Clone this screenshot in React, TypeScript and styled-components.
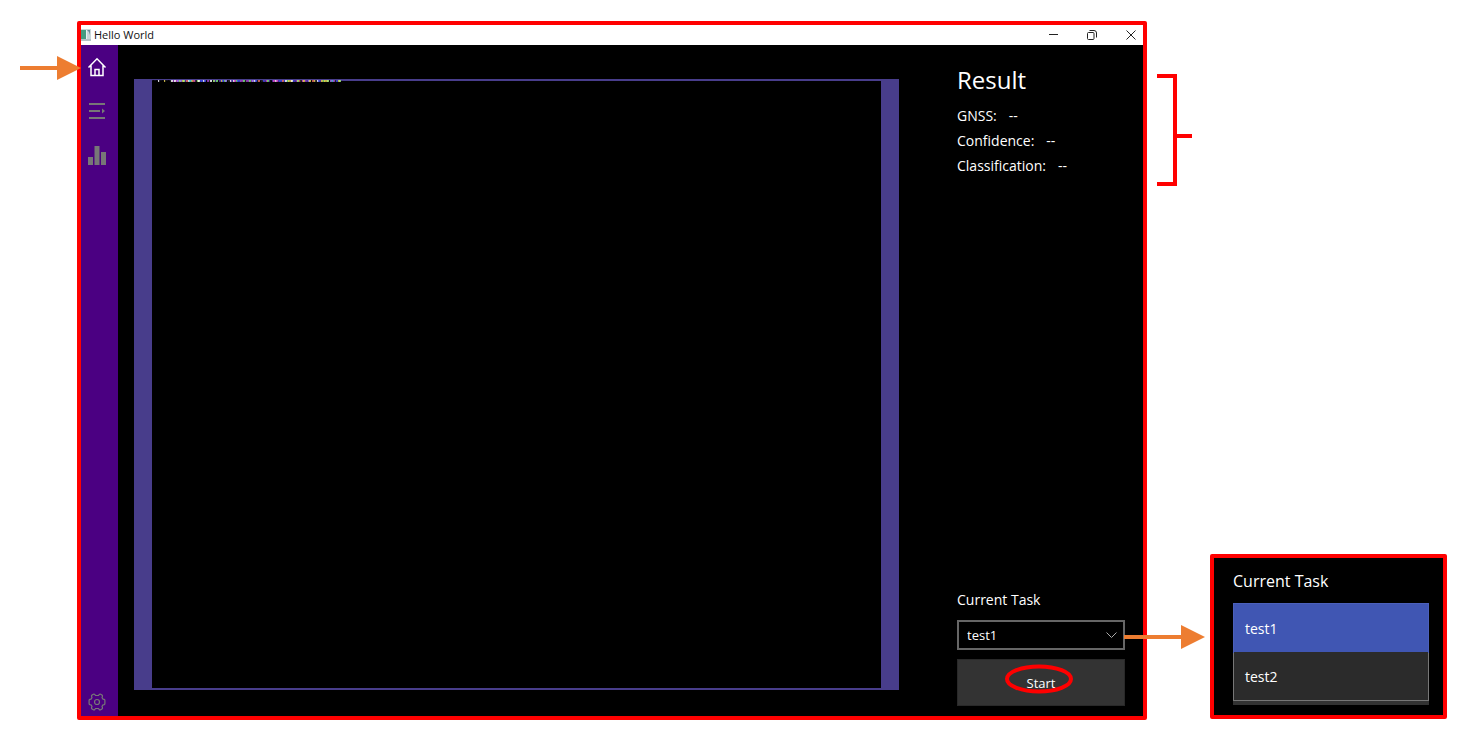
import React, { useState } from "react";
import styled, { createGlobalStyle } from "styled-components";

const GlobalStyle = createGlobalStyle`
  * { box-sizing: border-box; }
  body {
    margin: 0;
    background: #fff;
    font-family: "Open Sans", "Noto Sans", sans-serif;
  }
  button, select { font-family: inherit; }
`;

const RED = "#ff0000";
const ORANGE = "#ed7d31";

const Page = styled.div`
  display: grid;
  grid-template-columns: minmax(0, 1fr) 63px 237px;
  min-height: 100vh;
  padding: 21px 22px 22px 77px;
`;

const Window = styled.section`
  position: relative;
  display: flex;
  flex-direction: column;
  border: 4px solid ${RED};
  border-radius: 2px;
  background: #000;
  color: #fff;
`;

const TitleBar = styled.header`
  display: flex;
  align-items: center;
  height: 20px;
  background: #fff;
  color: #111;
  font-size: 11px;
  line-height: 20px;
`;

const AppTitle = styled.span`
  flex: 1;
  padding-left: 3px;
`;

const Controls = styled.div`
  display: flex;
  gap: 23px;
  padding-right: 4px;
`;

const IconButton = styled.button`
  display: grid;
  place-items: center;
  width: 16px;
  height: 18px;
  padding: 0;
  border: 0;
  background: none;
  color: #222;
`;

const Body = styled.div`
  display: flex;
  flex: 1;
`;

const Sidebar = styled.nav`
  display: flex;
  flex-direction: column;
  width: 37px;
  padding: 12px 6px 4px;
  background: #4b0082;
`;

const NavButton = styled.button<{ $active?: boolean; $last?: boolean }>`
  display: grid;
  place-items: center;
  width: 20px;
  height: 20px;
  margin: ${(p) => (p.$last ? "auto 0 0" : "0 0 24px")};
  padding: 0;
  border: 0;
  background: none;
  color: ${(p) => (p.$active ? "#fff" : "#777")};
`;

const Content = styled.main`
  display: grid;
  flex: 1;
  grid-template-columns: minmax(0, 1fr) 168px;
  gap: 58px;
  padding: 0 18px 0 16px;
`;

const Viewport = styled.div`
  margin: 34px 0 26px;
  border: solid #483d8b;
  border-width: 2px 18px;
  background: #000;
`;

const NoiseLine = styled.svg`
  display: block;
  margin-top: -1px;
`;

const Panel = styled.aside`
  display: flex;
  flex-direction: column;
  padding: 18px 0 10px;
`;

const Heading = styled.h1`
  margin: 0 0 6px;
  font-size: 24px;
  font-weight: 400;
  line-height: 34px;
`;

const Reading = styled.p`
  display: flex;
  gap: 12px;
  margin: 0;
  font-size: 14px;
  line-height: 25px;
`;

const TaskForm = styled.form`
  display: flex;
  flex-direction: column;
  margin-top: auto;
`;

const TaskLabel = styled.label`
  margin-bottom: 10px;
  font-size: 14px;
  line-height: 20px;
`;

const SelectBox = styled.div`
  display: grid;
  align-items: center;
  margin-bottom: 9px;
  > * { grid-area: 1 / 1; }
  > svg { justify-self: end; margin-right: 8px; pointer-events: none; }
`;

const Select = styled.select`
  appearance: none;
  width: 100%;
  height: 30px;
  padding: 0 28px 0 8px;
  border: 2px solid #666;
  border-radius: 0;
  background: #000;
  color: #fff;
  font-size: 13px;
`;

const StartButton = styled.button`
  position: relative;
  height: 47px;
  padding: 0;
  border: 1px solid #292929;
  background: #333;
  color: #fff;
  font-size: 13px;
`;

const StartMark = styled.svg`
  position: absolute;
  top: 4px;
  left: 46px;
  pointer-events: none;
`;

const ArrowOverlay = styled.svg<{ $side: "home" | "task" }>`
  position: absolute;
  ${(p) => (p.$side === "home" ? "left: -61px; top: 31px;" : "right: -62px; bottom: 67px;")}
  pointer-events: none;
`;

const Bracket = styled.svg`
  margin: 53px 0 0 10px;
  overflow: visible;
`;

const Popup = styled.section`
  align-self: end;
  justify-self: end;
  width: 237px;
  margin-bottom: 1px;
  padding: 11px 14px 14px 19px;
  border: 4px solid ${RED};
  border-radius: 2px;
  background: #000;
  color: #fff;
`;

const PopupTitle = styled.h2`
  margin: 0 0 11px;
  font-size: 16px;
  font-weight: 400;
  line-height: 24px;
`;

const Options = styled.div`
  border: 1px solid #777;
  border-top: 0;
  box-shadow: 0 4px #333;
`;

const Option = styled.button<{ $selected: boolean }>`
  display: block;
  width: 100%;
  height: 48px;
  padding: 0 11px;
  border: 0;
  background: ${(p) => (p.$selected ? "#4056b3" : "#2b2b2b")};
  color: #fff;
  box-shadow: ${(p) => (p.$selected ? "0 0 0 1px #4b60bb" : "none")};
  font-size: 14px;
  font-weight: ${(p) => (p.$selected ? 500 : 400)};
  text-align: left;
`;

const NOISE_COLORS = [
  "#3b46e0", "#000", "#e5d24a", "#6de06a", "#a13fc0", "#d849c9", "#fff",
  "#41c9dd", "#5431aa", "#e66a5a", "#a6ef7b", "#222", "#9b7bf0",
];

const noise = Array.from({ length: 126 }, (_, i) => {
  const value = Math.abs(Math.sin(i * 127 + 3) * 43758) % 1;
  return {
    x: Math.floor(i * 1.5),
    fill: i < 13 && i % 4 !== 0 ? "#000" : NOISE_COLORS[Math.floor(value * NOISE_COLORS.length)],
  };
});

const Arrow = ({ side, line, head }: { side: "home" | "task"; line: number; head: number }) => (
  <ArrowOverlay $side={side} width={line + head} height="24" aria-hidden="true">
    <path d={`M0 12H${line + 1}`} stroke={ORANGE} strokeWidth="4" />
    <path d={`M${line} 0L${line + head} 12L${line} 24Z`} fill={ORANGE} />
  </ArrowOverlay>
);

const AppIcon = () => (
  <svg width="10" height="14" viewBox="0 0 10 14" aria-hidden="true">
    <rect y="1" width="10" height="12" fill="#c9d6d8" />
    <rect y="2" width="5" height="9" fill="#469b80" />
    <path d="M5 2h1v9H5z" fill="#e8f1f4" />
    <path d="M6 2h3v5L8 4z" fill="#648b99" />
    <path d="M0 12h10" stroke="#9daeb2" />
  </svg>
);

const HomeIcon = () => (
  <svg width="20" height="20" fill="none" stroke="currentColor" strokeWidth="1.5" aria-hidden="true">
    <path d="M1.5 10.5 10 1.8l8.5 8.7M4 8.5v10h12v-10M8 18v-5.5h4V18" />
  </svg>
);

const QueueIcon = () => (
  <svg width="20" height="20" fill="none" stroke="currentColor" strokeWidth="2" aria-hidden="true">
    <path d="M2 3h16M2 10h11M2 17h16" />
    <path d="M15 7.5v5l3-2.5z" fill="currentColor" stroke="none" />
  </svg>
);

const ChartIcon = () => (
  <svg width="20" height="20" fill="currentColor" aria-hidden="true">
    <path d="M1 12h5v8.500H1zM7.500 1h5v19h-5zM14 7h5v13h-5z" />
  </svg>
);

const GearIcon = () => (
  <svg width="20" height="20" fill="none" stroke="currentColor" strokeWidth="1.2" strokeLinejoin="round" aria-hidden="true">
    <path d="M6.300 2.200Q7.200 1.800 7.800 2.500L8.500 3.500H11.500L12.200 2.500Q12.800 1.800 13.700 2.200L15.200 3.200Q15.700 3.700 15.400 4.400L15 5.700L16 7.200L17.200 7.400Q18 7.700 17.900 8.500V11.500Q18 12.300 17.200 12.600L16 12.800L15 14.300L15.400 15.600Q15.700 16.300 15.200 16.800L13.700 17.800Q12.800 18.200 12.200 17.500L11.500 16.500H8.500L7.800 17.500Q7.200 18.200 6.300 17.800L4.800 16.800Q4.300 16.300 4.600 15.600L5 14.300L4 12.800L2.800 12.600Q2 12.300 2.100 11.500V8.500Q2 7.700 2.800 7.400L4 7.200L5 5.700L4.600 4.400Q4.300 3.700 4.800 3.200Z" />
    <circle cx="10" cy="10" r="2.500" />
  </svg>
);

const readings = ["GNSS:", "Confidence:", "Classification:"];
const tasks = ["test1", "test2"];

export default function App() {
  const [task, setTask] = useState("test1");

  return (
    <>
      <GlobalStyle />
      <Page>
        <Window>
          <TitleBar>
            <AppIcon />
            <AppTitle>Hello World</AppTitle>
            <Controls>
              <IconButton aria-label="Minimize">
                <svg width="10" height="10" stroke="currentColor"><path d="M1 4.500h9" /></svg>
              </IconButton>
              <IconButton aria-label="Restore">
                <svg width="10" height="10" fill="none" stroke="currentColor">
                  <rect x=".5" y="2.500" width="6.500" height="7" rx="1" />
                  <path d="M2.500 .5h4.500q2.500 0 2.500 2.500v4.500" />
                </svg>
              </IconButton>
              <IconButton aria-label="Close">
                <svg width="10" height="10" stroke="currentColor"><path d="M.5 .5l9 9M9.500 .5l-9 9" /></svg>
              </IconButton>
            </Controls>
          </TitleBar>
          <Body>
            <Sidebar aria-label="Main">
              <NavButton $active aria-label="Home"><HomeIcon /></NavButton>
              <NavButton aria-label="Queue"><QueueIcon /></NavButton>
              <NavButton aria-label="Statistics"><ChartIcon /></NavButton>
              <NavButton $last aria-label="Settings"><GearIcon /></NavButton>
            </Sidebar>
            <Content>
              <Viewport>
                <NoiseLine width="190" height="2" aria-hidden="true">
                  {noise.map((n) => (
                    <rect key={n.x} x={n.x} y="0" width="2" height="2" fill={n.fill} opacity=".8" />
                  ))}
                </NoiseLine>
              </Viewport>
              <Panel>
                <Heading>Result</Heading>
                {readings.map((label) => (
                  <Reading key={label}>
                    <span>{label}</span>
                    <span>--</span>
                  </Reading>
                ))}
                <TaskForm onSubmit={(e) => e.preventDefault()}>
                  <TaskLabel htmlFor="task">Current Task</TaskLabel>
                  <SelectBox>
                    <Select id="task" value={task} onChange={(e) => setTask(e.target.value)}>
                      {tasks.map((t) => <option key={t}>{t}</option>)}
                    </Select>
                    <svg width="11" height="7" fill="none" stroke="#aaa" aria-hidden="true">
                      <path d="M.5 .5l5 5 5-5" />
                    </svg>
                  </SelectBox>
                  <StartButton type="submit">
                    Start
                    <StartMark width="70" height="30" fill="none" stroke={RED} strokeWidth="4" aria-hidden="true">
                      <ellipse cx="35" cy="15" rx="32" ry="12.500" />
                    </StartMark>
                  </StartButton>
                </TaskForm>
              </Panel>
            </Content>
          </Body>
          <Arrow side="home" line={37} head={24} />
          <Arrow side="task" line={57} head={24} />
        </Window>
        <Bracket width="35" height="112" fill="none" stroke={RED} strokeWidth="4" aria-hidden="true">
          <path d="M0 2H18V110H0M18 62H35" />
        </Bracket>
        <Popup>
          <PopupTitle id="popup-title">Current Task</PopupTitle>
          <Options role="listbox" aria-labelledby="popup-title">
            {tasks.map((t) => (
              <Option
                key={t}
                role="option"
                aria-selected={t === "test1"}
                $selected={t === "test1"}
                onClick={() => setTask(t)}
              >
                {t}
              </Option>
            ))}
          </Options>
        </Popup>
      </Page>
    </>
  );
}
